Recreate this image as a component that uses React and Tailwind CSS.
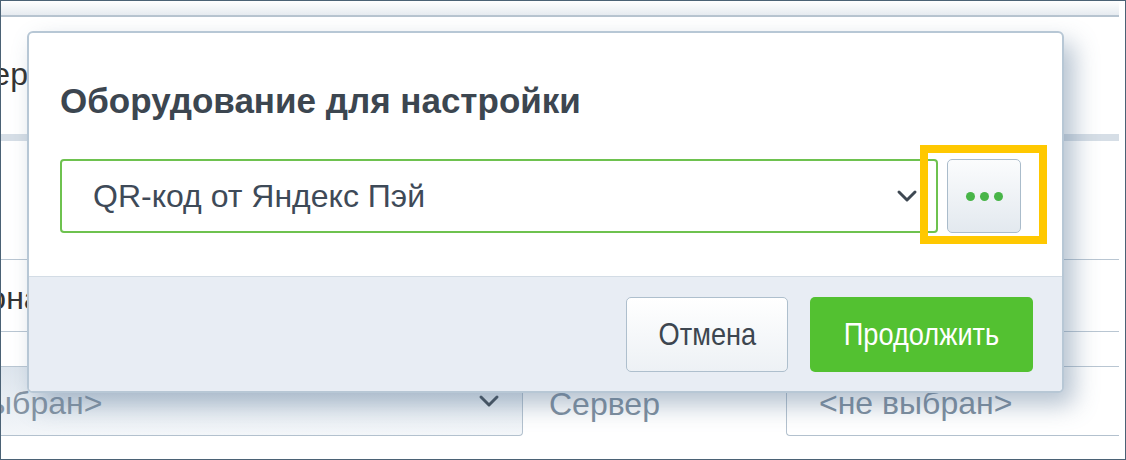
import React from "react";

const F = { fontFamily: '"Liberation Sans", Arial, sans-serif' };

function Chevron({ className = "" }) {
  return (
    <svg width="22" height="14" viewBox="0 0 22 14" className={className}>
      <path d="M3 3 L11 11 L19 3" fill="none" stroke="#3e4852" strokeWidth="3" strokeLinecap="round" strokeLinejoin="round" />
    </svg>
  );
}

export default function App() {
  return (
    <div className="relative w-[1126px] h-[460px] overflow-hidden bg-white border border-[#4b6275]" style={F}>
      {/* background page */}
      <div className="flex flex-col w-[1118px]">
        <div className="h-[16px] bg-gradient-to-b from-white to-[#e6ebf0] border-b-2 border-[#b7c4d0]" />
        <div className="h-[117px] pt-[41px]">
          <span className="block text-[32px] leading-none text-[#333] -ml-[84px] whitespace-nowrap">Сервер</span>
        </div>
        <div className="h-[7px] bg-[#d6dee6]" />
        <div className="h-[118px]" />
        <div className="h-[72px] border-t border-[#b9c6d2] pt-[22px]">
          <span className="block text-[32px] leading-none text-[#333] -ml-[32px] whitespace-nowrap">Зона</span>
        </div>
        <div className="h-[35px] border-t border-[#b9c6d2]" />
        <div className="h-[70px] border-t border-[#b9c6d2] flex">
          <div className="w-[522px] h-full bg-gradient-to-b from-[#dde5ed] to-[#f3f6f9] border-r border-b border-[#b3c1ce] rounded-br-[4px] flex items-center justify-between pr-[22px] overflow-hidden">
            <span className="text-[32px] leading-none text-[#8594a3] -ml-[92px] mt-[4px] whitespace-nowrap">&lt;не выбран&gt;</span>
            <Chevron />
          </div>
          <div className="w-[263px] flex items-center pl-[26px]">
            <span className="text-[32px] leading-none text-[#7d8d9d] mt-[4px]">Сервер</span>
          </div>
          <div className="flex-1 h-full border-l border-b border-[#b3c1ce] rounded-bl-[4px] flex items-center pl-[32px]">
            <span className="text-[32px] leading-none text-[#7d8d9d] mt-[4px] whitespace-nowrap">&lt;не выбран&gt;</span>
          </div>
        </div>
      </div>

      {/* modal */}
      <div className="absolute left-[26px] top-[30px] w-[1037px] h-[362px] bg-white border-2 border-[#b7c7d5] rounded-[6px] shadow-[10px_12px_24px_rgba(90,120,150,0.45)] flex flex-col overflow-hidden">
        <div className="h-[243px] flex flex-col px-[31px]">
          <h2 className="mt-[48px] text-[35px] font-bold text-[#3c4650] leading-[40px] whitespace-nowrap">Оборудование для настройки</h2>
          <div className="mt-[38px] flex items-center gap-[9px]">
            <div className="w-[878px] h-[74px] border-2 border-[#6ec24f] rounded-[4px] flex items-center justify-between pl-[31px] pr-[18px]">
              <span className="text-[32px] leading-none text-[#3e4a58] whitespace-nowrap">QR-код от Яндекс Пэй</span>
              <Chevron />
            </div>
            <div className="w-[74px] h-[74px] rounded-[5px] border border-[#aabccb] bg-gradient-to-b from-[#fbfcfd] to-[#e3e9ef] flex items-center justify-center gap-[5px]">
              <span className="w-[9px] h-[9px] rounded-full bg-[#48b548]" />
              <span className="w-[9px] h-[9px] rounded-full bg-[#48b548]" />
              <span className="w-[9px] h-[9px] rounded-full bg-[#48b548]" />
            </div>
          </div>
        </div>
        <div className="flex-1 bg-[#e8edf4] border-t border-[#d3dce5] flex items-center justify-end gap-[22px] pr-[29px]">
          <button className="w-[162px] h-[75px] rounded-[5px] border border-[#aebfcd] bg-gradient-to-b from-white to-[#edf1f5] flex items-center justify-center">
            <span className="inline-block text-[32px] leading-none text-[#3d4650] scale-x-[0.85] whitespace-nowrap">Отмена</span>
          </button>
          <button className="w-[223px] h-[75px] rounded-[5px] bg-[#53c131] flex items-center justify-center">
            <span className="inline-block text-[32px] leading-none text-white scale-x-[0.85] whitespace-nowrap">Продолжить</span>
          </button>
        </div>
      </div>

      {/* highlight */}
      <div className="absolute left-[919px] top-[144px] w-[127px] h-[99px] border-[8px] border-[#ffc800]" />
    </div>
  );
}
